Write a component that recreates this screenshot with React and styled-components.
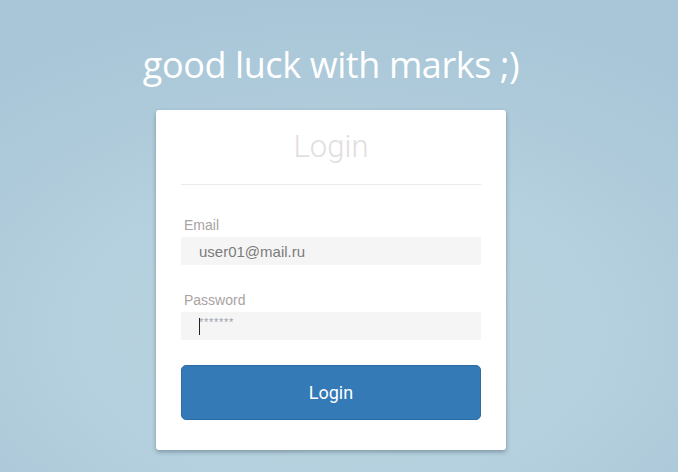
import React from "react";
import styled, { createGlobalStyle } from "styled-components";

const GlobalStyle = createGlobalStyle`
  html, body {
    margin: 0;
    padding: 0;
  }
  body {
    font-family: "Liberation Sans", Arial, sans-serif;
  }
`;

const Page = styled.div`
  min-height: 472px;
  display: flex;
  flex-direction: column;
  align-items: center;
  padding-right: 16px;
  background: radial-gradient(
    ellipse 80% 70% at 50% 70%,
    #bcd5e2 0%,
    #b4cfdd 50%,
    #a8c6d8 100%
  );
`;

const Title = styled.h1`
  margin: 38px 0 0;
  font-family: "Open Sans", sans-serif;
  font-weight: 400;
  font-size: 36px;
  line-height: 54px;
  color: #fff;
  letter-spacing: -0.4px;
`;

const Card = styled.form`
  box-sizing: border-box;
  width: 350px;
  margin-top: 18px;
  padding: 16px 25px 30px;
  background: #fff;
  border-radius: 3px;
  box-shadow: 0 2px 4px rgba(60, 80, 95, 0.45);
`;

const CardTitle = styled.h2`
  margin: 0;
  padding-bottom: 16px;
  font-family: Roboto, sans-serif;
  font-weight: 300;
  font-size: 31px;
  line-height: 42px;
  text-align: center;
  color: #e2dede;
  border-bottom: 1px solid #ebebeb;
`;

const Field = styled.div`
  display: flex;
  flex-direction: column;
  margin-top: ${(p) => p.$top}px;
`;

const Label = styled.label`
  padding-left: 3px;
  margin-bottom: 4px;
  font-size: 14px;
  line-height: 16px;
  color: #a9a3a3;
`;

const Input = styled.div`
  position: relative;
  box-sizing: border-box;
  height: 28px;
  display: flex;
  align-items: ${(p) => (p.$masked ? "flex-start" : "center")};
  padding: ${(p) => (p.$masked ? "4px 0 0 18px" : "0 0 0 18px")};
  background: #f5f5f5;
  font-size: ${(p) => (p.$masked ? "11px" : "15px")};
  color: ${(p) => (p.$masked ? "#9aa4ae" : "#7b7b7b")};
  letter-spacing: ${(p) => (p.$masked ? "0.7px" : "0")};
`;

const Caret = styled.span`
  position: absolute;
  left: 18px;
  top: 6px;
  width: 1px;
  height: 17px;
  background: #222;
`;

const Button = styled.button`
  width: 100%;
  height: 55px;
  margin-top: 25px;
  background: #337ab7;
  border: 1px solid #2e6da4;
  border-radius: 5px;
  color: #fff;
  font-family: Roboto, sans-serif;
  font-size: 18px;
  cursor: pointer;
`;

export default function App() {
  return (
    <Page>
      <GlobalStyle />
      <Title>good luck with marks ;)</Title>
      <Card onSubmit={(e) => e.preventDefault()}>
        <CardTitle>Login</CardTitle>
        <Field $top={32}>
          <Label>Email</Label>
          <Input>user01@mail.ru</Input>
        </Field>
        <Field $top={27}>
          <Label>Password</Label>
          <Input $masked>
            <Caret />
            *******
          </Input>
        </Field>
        <Button type="submit">Login</Button>
      </Card>
    </Page>
  );
}
